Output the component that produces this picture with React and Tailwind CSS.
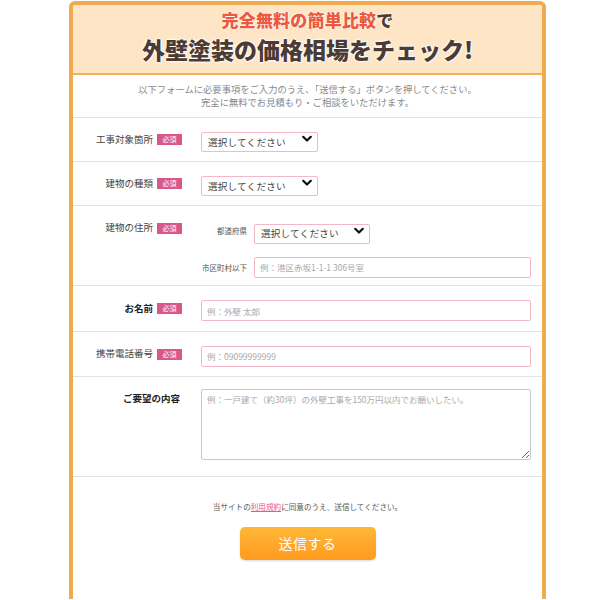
import React from "react";

const FONT = { fontFamily: '"Noto Sans CJK JP", "Noto Sans", sans-serif' };

function Badge() {
  return (
    <span className="inline-flex h-[11px] w-[25px] items-center justify-center bg-[#d9588b] text-[7px] leading-none text-white">
      必須
    </span>
  );
}

function Chevron() {
  return (
    <svg className="pointer-events-none absolute right-[6px] top-1/2 -translate-y-1/2" width="10" height="7" viewBox="0 0 10 7">
      <path d="M1.2 1.2 L5 5 L8.8 1.2" fill="none" stroke="#111" strokeWidth="2.2" strokeLinecap="round" strokeLinejoin="round" />
    </svg>
  );
}

function Select({ w }) {
  return (
    <div className={`relative ${w}`}>
      <select className="h-[20px] w-full appearance-none rounded-[2px] border border-[#f3b7c7] bg-white pl-[6px] text-[9.6px] leading-none tracking-[0.2px] text-[#444] outline-none">
        <option>選択してください</option>
      </select>
      <Chevron />
    </div>
  );
}

function TextInput({ ph }) {
  return (
    <input
      placeholder={ph}
      className="h-[21px] w-full rounded-[2px] border border-[#f3b7c7] bg-white px-[5px] text-[8.5px] text-[#444] outline-none placeholder:text-[#aaa]"
    />
  );
}

export default function App() {
  return (
    <div className="min-h-[600px] bg-white pt-[1px]" style={FONT}>
      <div className="ml-[69px] w-[477px] overflow-hidden rounded-t-[6px] border-4 border-b-0 border-[#eeab50] bg-white">
        {/* header */}
        <div className="flex h-[70px] flex-col items-center border-b-2 border-[#f0b05c] bg-[#fde5c5] pt-[6px]">
          <div className="text-[17px] font-black leading-[17px] tracking-[0.2px] [text-shadow:0_0_2px_#fff,0_0_2px_#fff,0_0_1px_#fff]">
            <span className="text-[#ec5a3d]">完全無料の簡単比較</span>
            <span className="text-[#4b3b34]">で</span>
          </div>
          <div className="mt-[10px] text-[23px] font-black leading-[23px] text-[#4b3b34] [text-shadow:0_0_2px_#fff,0_0_2px_#fff,0_0_2px_#fff,0_0_3px_#fff]">
            外壁塗装の価格相場をチェック!
          </div>
        </div>
        {/* intro */}
        <div className="flex h-[43px] flex-col items-center justify-center border-b border-[#e3e3e3] text-[9.3px] leading-[13px] text-[#8a8a8a]">
          <p>以下フォームに必要事項をご入力のうえ、「送信する」ボタンを押してください。</p>
          <p>完全に無料でお見積もり・ご相談をいただけます。</p>
        </div>

        {/* row 1 */}
        <div className="flex h-[44px] items-center border-b border-[#e3e3e3]">
          <div className="flex w-[109px] shrink-0 items-center justify-end gap-[4px]">
            <span className="text-[9.5px] leading-none text-[#444]">工事対象箇所</span>
            <Badge />
          </div>
          <div className="ml-[19px]">
            <Select w="w-[117px]" />
          </div>
        </div>

        {/* row 2 */}
        <div className="flex h-[44px] items-center border-b border-[#e3e3e3]">
          <div className="flex w-[109px] shrink-0 items-center justify-end gap-[4px]">
            <span className="text-[9.5px] leading-none text-[#444]">建物の種類</span>
            <Badge />
          </div>
          <div className="ml-[19px]">
            <Select w="w-[117px]" />
          </div>
        </div>

        {/* row 3 */}
        <div className="flex h-[80px] items-start border-b border-[#e3e3e3] pt-[12px]">
          <div className="flex h-[20px] w-[109px] shrink-0 items-center justify-end gap-[4px]">
            <span className="text-[9.5px] leading-none text-[#444]">建物の住所</span>
            <Badge />
          </div>
          <div className="ml-[18px] flex flex-1 flex-col gap-[13px] pr-[11px]">
            <div className="flex items-center gap-[7px]">
              <span className="w-[47px] text-right text-[7.5px] text-[#555]">都道府県</span>
              <Select w="w-[116px]" />
            </div>
            <div className="flex items-center gap-[7px]">
              <span className="w-[47px] shrink-0 text-right text-[7.5px] text-[#555]">市区町村以下</span>
              <TextInput ph="例：港区赤坂1-1-1 306号室" />
            </div>
          </div>
        </div>

        {/* row 4 */}
        <div className="flex h-[46px] items-center border-b border-[#e3e3e3] pr-[11px]">
          <div className="flex w-[109px] shrink-0 items-center justify-end gap-[4px]">
            <span className="text-[9.5px] font-bold leading-none text-[#222]">お名前</span>
            <Badge />
          </div>
          <div className="ml-[19px] flex-1">
            <TextInput ph="例：外壁 太郎" />
          </div>
        </div>

        {/* row 5 */}
        <div className="flex h-[45px] items-center border-b border-[#e3e3e3] pr-[11px]">
          <div className="flex w-[109px] shrink-0 items-center justify-end gap-[4px]">
            <span className="text-[9.5px] leading-none text-[#444]">携帯電話番号</span>
            <Badge />
          </div>
          <div className="ml-[19px] flex-1">
            <TextInput ph="例：09099999999" />
          </div>
        </div>

        {/* row 6 */}
        <div className="flex h-[100px] items-start border-b border-[#e3e3e3] pr-[11px] pt-[12px]">
          <div className="flex w-[109px] shrink-0 justify-end pr-[2px] pt-[5px]">
            <span className="text-[9.5px] font-bold leading-none text-[#222]">ご要望の内容</span>
          </div>
          <div className="ml-[19px] flex-1">
            <textarea
              placeholder="例：一戸建て（約30坪）の外壁工事を150万円以内でお願いしたい。"
              className="block h-[71px] w-full rounded-[2px] border border-[#c8c8c8] bg-white px-[5px] py-[3px] text-[8.5px] leading-[12px] text-[#444] outline-none placeholder:text-[#aaa]"
            />
          </div>
        </div>

        {/* footer */}
        <div className="flex h-[122px] flex-col items-center pt-[25px]">
          <p className="text-[7.6px] leading-[10px] text-[#555]">
            当サイトの<span className="text-[#e85a86] underline">利用規約</span>に同意のうえ、送信してください。
          </p>
          <button className="mt-[15px] flex h-[33px] w-[136px] items-center justify-center rounded-[5px] bg-gradient-to-b from-[#ffb836] to-[#ff9a1f] text-[14px] tracking-[0.5px] text-white shadow-[0_1px_2px_rgba(0,0,0,0.15)]">
            送信する
          </button>
        </div>
      </div>
    </div>
  );
}
